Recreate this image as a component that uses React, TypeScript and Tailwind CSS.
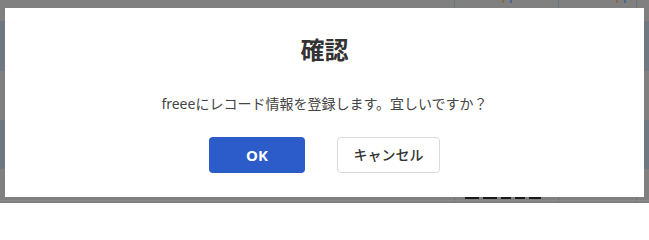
import React from 'react';

const font = { fontFamily: '"Noto Sans", "Noto Sans CJK JP", sans-serif' };

interface RowProps {
  height: string;
  tone: string;
  children?: React.ReactNode;
}

// one dimmed table row behind the modal; cells split by column lines
const TableRow: React.FC<RowProps> = ({ height, tone, children }) => (
  <div className={`flex ${height} ${tone}`}>
    <div className="w-[455px] border-r border-[#6c737c]"></div>
    <div className="w-[104px] border-r border-[#6c737c] flex items-start pl-[10px] gap-[6px]">{children}</div>
    <div className="w-[78px] border-r border-[#6c737c]"></div>
    <div className="flex-1"></div>
  </div>
);

/**
 * ConfirmDialog - freee registration confirm modal over a dimmed table
 */
const App: React.FC = () => {
  return (
    <div className="relative w-[649px] h-[203px] overflow-hidden bg-[#808080]" style={font}>
      {/* dimmed table underneath */}
      <div className="flex flex-col">
        <div className="flex h-[21px]">
          <div className="w-[455px] border-r border-[#6c737c]"></div>
          <div className="w-[104px] border-r border-[#6c737c] flex justify-center gap-[6px]">
            <span className="h-[3px] w-[2px] bg-[#8a6a3a]"></span>
            <span className="h-[3px] w-[2px] bg-[#4a6a8a]"></span>
          </div>
          <div className="w-[78px] border-r border-[#6c737c] flex justify-end pr-[10px] gap-[6px]">
            <span className="h-[3px] w-[2px] bg-[#8a6a3a]"></span>
            <span className="h-[3px] w-[2px] bg-[#4a6a8a]"></span>
          </div>
          <div className="flex-1"></div>
        </div>
        <TableRow height="h-[50px]" tone="bg-[#6f7780]" />
        <TableRow height="h-[49px]" tone="bg-[#808080]" />
        <TableRow height="h-[49px]" tone="bg-[#6f7780]" />
        <TableRow height="h-[31px]" tone="bg-[#808080]">
          <div className="mt-[28px] flex gap-[4px]">
            <span className="h-[2px] w-[14px] bg-[#1a1a1a]"></span>
            <span className="h-[2px] w-[14px] bg-[#1a1a1a]"></span>
            <span className="h-[2px] w-[10px] bg-[#1a1a1a]"></span>
            <span className="h-[2px] w-[10px] bg-[#1a1a1a]"></span>
            <span className="h-[2px] w-[12px] bg-[#1a1a1a]"></span>
          </div>
        </TableRow>
        <div className="h-px bg-[#8c8c8c]"></div>
        <TableRow height="h-[2px]" tone="bg-[#808080]" />
      </div>

      {/* modal */}
      <div className="absolute left-[5px] top-[8px] w-[639px] h-[189px] bg-white flex flex-col items-center pt-[26px]">
        <h2 className="text-2xl leading-8 font-bold text-[#333]">確認</h2>
        <p className="mt-[28px] text-sm leading-5 text-[#444]">freeeにレコード情報を登録します。宜しいですか？</p>
        <div className="mt-[23px] flex gap-8">
          <button className="w-[96px] h-9 rounded bg-[#2b5cc9] text-white text-[15px] font-bold">OK</button>
          <button className="w-[103px] h-9 rounded border border-[#dadada] bg-white text-[#333] text-sm font-medium">キャンセル</button>
        </div>
      </div>
    </div>
  );
};

export default App;
